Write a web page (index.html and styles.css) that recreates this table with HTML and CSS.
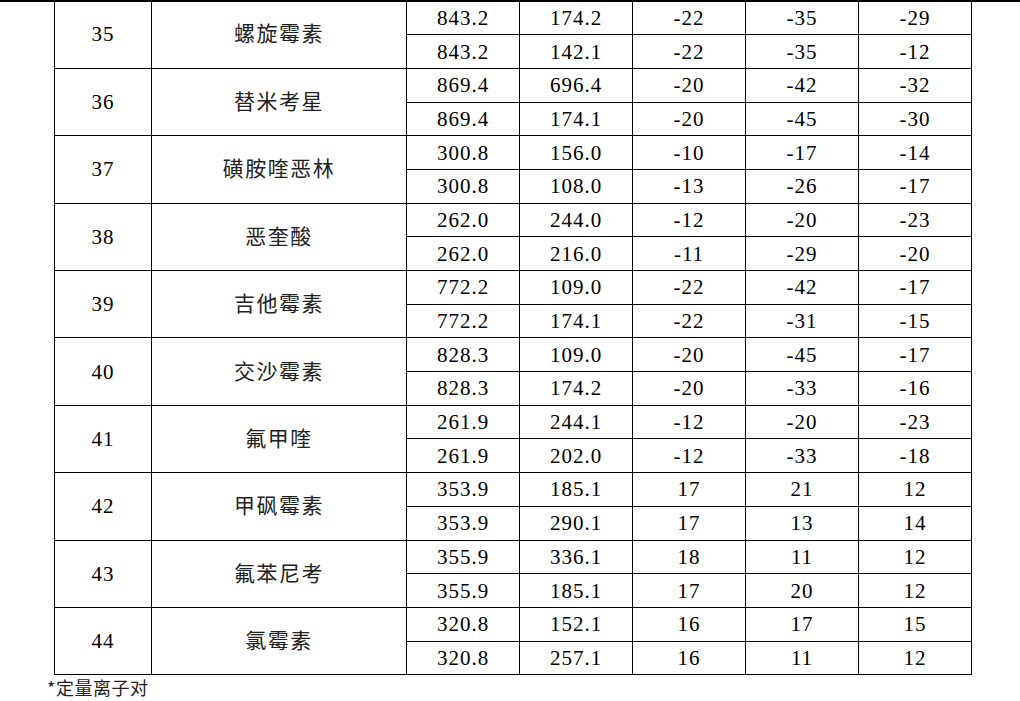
FILE: index.html
```html
<!DOCTYPE html>
<html lang="zh">
<head>
<meta charset="utf-8">
<link rel="stylesheet" href="styles.css">
</head>
<body>
<div class="rule"></div>
<table class="data">
<colgroup>
<col class="c-no"><col class="c-name"><col class="c-v"><col class="c-v"><col class="c-v"><col class="c-v"><col class="c-v">
</colgroup>
<tbody>
<tr class="first"><td rowspan="2" class="num">35</td><td rowspan="2" class="name">螺旋霉素</td><td>843.2</td><td>174.2</td><td>-22</td><td>-35</td><td>-29</td></tr>
<tr><td>843.2</td><td>142.1</td><td>-22</td><td>-35</td><td>-12</td></tr>
<tr><td rowspan="2" class="num">36</td><td rowspan="2" class="name">替米考星</td><td>869.4</td><td>696.4</td><td>-20</td><td>-42</td><td>-32</td></tr>
<tr><td>869.4</td><td>174.1</td><td>-20</td><td>-45</td><td>-30</td></tr>
<tr><td rowspan="2" class="num">37</td><td rowspan="2" class="name">磺胺喹恶林</td><td>300.8</td><td>156.0</td><td>-10</td><td>-17</td><td>-14</td></tr>
<tr><td>300.8</td><td>108.0</td><td>-13</td><td>-26</td><td>-17</td></tr>
<tr><td rowspan="2" class="num">38</td><td rowspan="2" class="name">恶奎酸</td><td>262.0</td><td>244.0</td><td>-12</td><td>-20</td><td>-23</td></tr>
<tr><td>262.0</td><td>216.0</td><td>-11</td><td>-29</td><td>-20</td></tr>
<tr><td rowspan="2" class="num">39</td><td rowspan="2" class="name">吉他霉素</td><td>772.2</td><td>109.0</td><td>-22</td><td>-42</td><td>-17</td></tr>
<tr><td>772.2</td><td>174.1</td><td>-22</td><td>-31</td><td>-15</td></tr>
<tr><td rowspan="2" class="num">40</td><td rowspan="2" class="name">交沙霉素</td><td>828.3</td><td>109.0</td><td>-20</td><td>-45</td><td>-17</td></tr>
<tr><td>828.3</td><td>174.2</td><td>-20</td><td>-33</td><td>-16</td></tr>
<tr><td rowspan="2" class="num">41</td><td rowspan="2" class="name">氟甲喹</td><td>261.9</td><td>244.1</td><td>-12</td><td>-20</td><td>-23</td></tr>
<tr><td>261.9</td><td>202.0</td><td>-12</td><td>-33</td><td>-18</td></tr>
<tr><td rowspan="2" class="num">42</td><td rowspan="2" class="name">甲砜霉素</td><td>353.9</td><td>185.1</td><td>17</td><td>21</td><td>12</td></tr>
<tr><td>353.9</td><td>290.1</td><td>17</td><td>13</td><td>14</td></tr>
<tr><td rowspan="2" class="num">43</td><td rowspan="2" class="name">氟苯尼考</td><td>355.9</td><td>336.1</td><td>18</td><td>11</td><td>12</td></tr>
<tr><td>355.9</td><td>185.1</td><td>17</td><td>20</td><td>12</td></tr>
<tr><td rowspan="2" class="num">44</td><td rowspan="2" class="name">氯霉素</td><td>320.8</td><td>152.1</td><td>16</td><td>17</td><td>15</td></tr>
<tr><td>320.8</td><td>257.1</td><td>16</td><td>11</td><td>12</td></tr>
</tbody>
</table>
<p class="note">*定量离子对</p>
</body>
</html>
```
FILE: styles.css
```css
html, body {
  margin: 0;
  padding: 0;
  background: #fff;
}
body {
  width: 1020px;
  height: 701px;
  overflow: hidden;
  font-family: "Liberation Serif", "Noto Sans CJK SC", serif;
  color: #000;
}
.rule {
  height: 2px;
  background: #000;
  width: 1020px;
}
.data {
  margin-left: 54px;
  width: 918px;
  border-collapse: collapse;
  table-layout: fixed;
  margin-top: -1px;
}
.c-no { width: 97px; }
.c-name { width: 255px; }
.c-v { width: 113px; }
.data tr { height: 33.7px; }
.data td {
  border: 1px solid #000;
  padding: 0;
  text-align: center;
  vertical-align: middle;
  font-size: 21px;
  line-height: 24px;
  letter-spacing: 1px;
}
.data tr.first td { border-top: none; }
.data td.name {
  font-family: "Noto Sans CJK SC", sans-serif;
  font-size: 21px;
  letter-spacing: 1.5px;
  color: #222;
  padding-bottom: 4px;
}
.note {
  margin: 3px 0 0 47px;
  font-family: "Noto Sans CJK SC", sans-serif;
  font-size: 18px;
  line-height: 19px;
  letter-spacing: 0.5px;
  color: #222;
}
```
